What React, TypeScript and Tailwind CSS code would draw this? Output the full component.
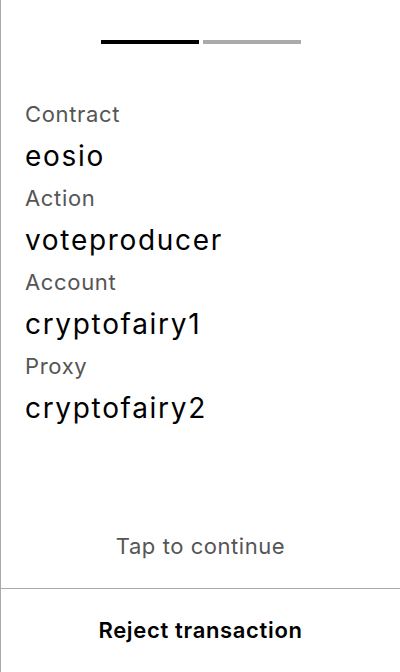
export default function App() {
  const rows = [
    { label: "Contract", value: "eosio" },
    { label: "Action", value: "voteproducer" },
    { label: "Account", value: "cryptofairy1" },
    { label: "Proxy", value: "cryptofairy2" },
  ];

  return (
    <div
      className="h-[672px] w-[400px] flex flex-col bg-white border-l border-[#aaaaaa] text-black"
      style={{ fontFamily: "Inter, 'Noto Sans', sans-serif" }}
    >
      {/* Step indicator */}
      <div className="flex justify-center gap-1 pt-10">
        <div className="w-[98px] h-1 bg-black" />
        <div className="w-[98px] h-1 bg-[#aaaaaa]" />
      </div>

      {/* Transaction details */}
      <div className="flex flex-col px-6 pt-[50px]">
        {rows.map((row) => (
          <div key={row.label} className="flex flex-col">
            <span className="text-[22px] leading-[40px] tracking-[0.03em] text-[#555555]">
              {row.label}
            </span>
            <span className="text-[28px] leading-[44px] tracking-[0.06em]">{row.value}</span>
          </div>
        ))}
      </div>

      <div className="mt-auto flex flex-col">
        <div className="h-[84px] flex items-center justify-center text-[22px] tracking-[0.025em] text-[#555555]">
          Tap to continue
        </div>
        <div className="h-[84px] border-t border-[#aaaaaa] flex items-center justify-center text-[22px] tracking-[0.03em] font-semibold">
          Reject transaction
        </div>
      </div>
    </div>
  );
}
